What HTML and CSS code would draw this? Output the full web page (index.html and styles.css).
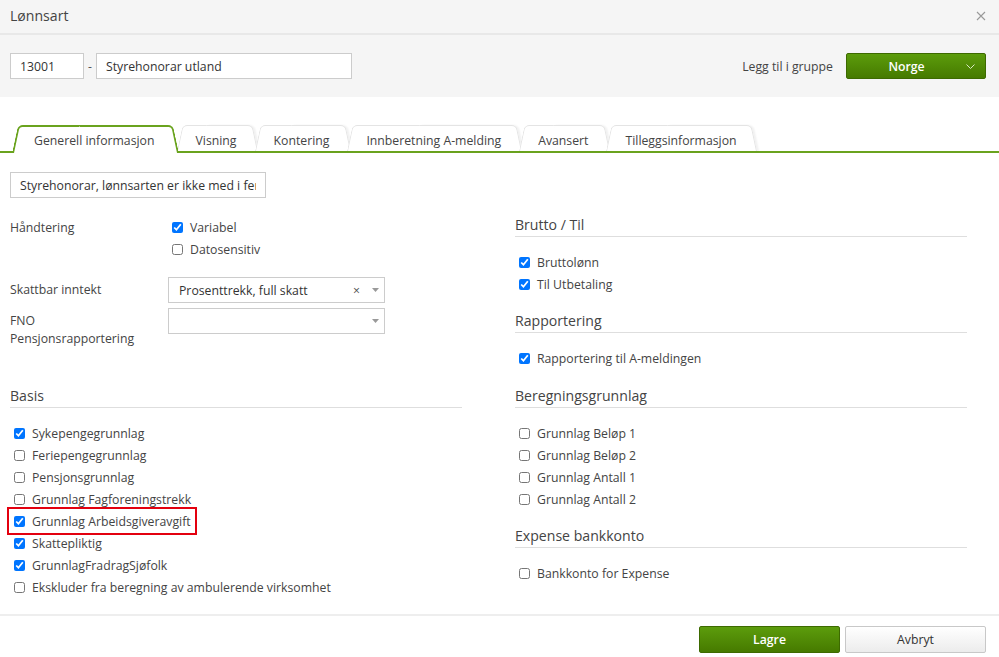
FILE: index.html
```html
<!DOCTYPE html>
<html lang="no">
<head>
    <meta charset="UTF-8">
    <title>Lønnsart</title>
    <link rel="stylesheet" href="styles.css">
</head>
<body>
<div class="dialog">
    <div class="dialog-title">
        <span>Lønnsart</span>
        <svg class="close" width="10" height="10" viewBox="0 0 10 10"><path d="M1 1L9 9M9 1L1 9" stroke="#999" stroke-width="1.1" fill="none"/></svg>
    </div>

    <div class="dialog-head">
        <input class="inp inp-nr" value="13001">
        <span class="dash">-</span>
        <input class="inp inp-name" value="Styrehonorar utland">
        <span class="group-label">Legg til i gruppe</span>
        <button class="btn btn-green btn-group">
            <span class="btn-text">Norge</span>
            <svg width="9" height="5" viewBox="0 0 9 5"><path d="M0.5 0.5L4.5 4.5L8.5 0.5" stroke="#d8e8c4" stroke-width="1" fill="none"/></svg>
        </button>
    </div>

    <ul class="tabs">
        <li class="active">Generell informasjon</li>
        <li>Visning</li>
        <li>Kontering</li>
        <li>Innberetning A-melding</li>
        <li>Avansert</li>
        <li>Tilleggsinformasjon</li>
    </ul>

    <div class="panel">
        <div class="col">
            <input class="inp inp-desc" value="Styrehonorar, lønnsarten er ikke med i feriepengegrunnlaget">

            <div class="field field-handling">
                <div class="field-label label-top">Håndtering</div>
                <div>
                    <label class="check check-inline"><input type="checkbox" checked>Variabel</label>
                    <label class="check check-inline"><input type="checkbox">Datosensitiv</label>
                </div>
            </div>

            <div class="field field-skatt">
                <div class="field-label label-tall">Skattbar inntekt</div>
                <div class="select">
                    <span class="select-value">Prosenttrekk, full skatt</span>
                    <span class="select-clear">×</span>
                    <svg class="select-arrow" width="7" height="4" viewBox="0 0 7 4"><path d="M0 0H7L3.5 4Z" fill="#999"/></svg>
                </div>
            </div>

            <div class="field field-fno">
                <div class="field-label label-wrap">FNO Pensjonsrapportering</div>
                <div class="select">
                    <span class="select-value"></span>
                    <svg class="select-arrow" width="7" height="4" viewBox="0 0 7 4"><path d="M0 0H7L3.5 4Z" fill="#999"/></svg>
                </div>
            </div>

            <div class="section section-basis">
                <h3 class="section-title">Basis</h3>
                <div class="checks-list">
                    <label class="check"><input type="checkbox" checked>Sykepengegrunnlag</label>
                    <label class="check"><input type="checkbox">Feriepengegrunnlag</label>
                    <label class="check"><input type="checkbox">Pensjonsgrunnlag</label>
                    <label class="check"><input type="checkbox">Grunnlag Fagforeningstrekk</label>
                    <label class="check highlight"><input type="checkbox" checked>Grunnlag Arbeidsgiveravgift</label>
                    <label class="check"><input type="checkbox" checked>Skattepliktig</label>
                    <label class="check"><input type="checkbox" checked>GrunnlagFradragSjøfolk</label>
                    <label class="check"><input type="checkbox">Ekskluder fra beregning av ambulerende virksomhet</label>
                </div>
            </div>
        </div>

        <div class="col">
            <div class="section section-first">
                <h3 class="section-title">Brutto / Til</h3>
                <div class="checks-list">
                    <label class="check"><input type="checkbox" checked>Bruttolønn</label>
                    <label class="check"><input type="checkbox" checked>Til Utbetaling</label>
                </div>
            </div>

            <div class="section">
                <h3 class="section-title">Rapportering</h3>
                <div class="checks-list">
                    <label class="check"><input type="checkbox" checked>Rapportering til A-meldingen</label>
                </div>
            </div>

            <div class="section section-calc">
                <h3 class="section-title">Beregningsgrunnlag</h3>
                <div class="checks-list">
                    <label class="check"><input type="checkbox">Grunnlag Beløp 1</label>
                    <label class="check"><input type="checkbox">Grunnlag Beløp 2</label>
                    <label class="check"><input type="checkbox">Grunnlag Antall 1</label>
                    <label class="check"><input type="checkbox">Grunnlag Antall 2</label>
                </div>
            </div>

            <div class="section">
                <h3 class="section-title">Expense bankkonto</h3>
                <div class="checks-list">
                    <label class="check"><input type="checkbox">Bankkonto for Expense</label>
                </div>
            </div>
        </div>
    </div>

    <div class="dialog-foot">
        <button class="btn btn-green btn-foot">Lagre</button>
        <button class="btn btn-light btn-foot">Avbryt</button>
    </div>
</div>
</body>
</html>
```

FILE: styles.css
```css
*{
    margin: 0;
    padding: 0;
    box-sizing: border-box;
}
ul{
    list-style: none;
}
body{
    font-family: "Open Sans", "Liberation Sans", sans-serif;
    font-size: 12.25px;
    color: #444;
    background: #fff;
}
.dialog{
    height: 657px;
    display: flex;
    flex-direction: column;
}

/* title bar */
.dialog-title{
    height: 35px;
    display: flex;
    align-items: center;
    justify-content: space-between;
    padding: 0 13px 2px 10px;
    background: #f5f5f5;
    border-bottom: 2px solid #e8e8e8;
    font-size: 14.1px;
    color: #444;
}

/* header with number / name */
.dialog-head{
    display: flex;
    align-items: center;
    padding: 18px 13px 18px 10px;
    background: #f5f5f5;
}
.inp{
    height: 26px;
    border: 1px solid #ccc;
    background: #fff;
    padding: 0 9px;
    font: inherit;
    color: #333;
    outline: none;
}
.inp-nr{
    width: 74px;
}
.dash{
    width: 12px;
    text-align: center;
    color: #555;
}
.inp-name{
    width: 256px;
}
.group-label{
    margin-left: auto;
    margin-right: 13px;
    color: #444;
}
.btn{
    height: 26px;
    border-radius: 2px;
    font: inherit;
    cursor: pointer;
}
.btn-green{
    background: linear-gradient(#5c9c0c, #467a00);
    border: 1px solid #3d6a00;
    color: #fff;
    font-weight: 600;
}
.btn-group{
    width: 140px;
    display: flex;
    align-items: center;
    padding: 0 10px 0 0;
}
.btn-text{
    flex: 1;
    text-align: center;
}

/* tabs */
.tabs{
    display: flex;
    height: 28px;
    margin-top: 28px;
    padding-left: 12px;
    border-bottom: 2px solid #6aa31e;
}
.tabs li{
    position: relative;
    z-index: 1;
    height: 28px;
    margin: 0 -3px -2px 0;
    padding: 3px 21px 0 19px;
    line-height: 25px;
    color: #444;
    cursor: pointer;
}
.tabs li::before,.tabs li::after{
    content: "";
    position: absolute;
    top: 0;
    bottom: 2px;
    width: 55%;
    background: #fff;
    border-top: 1px solid #e4e4e4;
    z-index: -1;
}
.tabs li::before{
    left: 0;
    border-left: 1px solid #e4e4e4;
    border-top-left-radius: 5px;
    transform-origin: bottom left;
    transform: skewX(-12deg);
}
.tabs li::after{
    right: 0;
    border-right: 1px solid #e4e4e4;
    border-top-right-radius: 5px;
    transform-origin: bottom right;
    transform: skewX(12deg);
    box-shadow: 2px 0 2px rgba(0,0,0,0.06);
}
.tabs li.active{
    z-index: 2;
    padding: 3px 25px 0 22px;
}
.tabs li.active::before,.tabs li.active::after{
    bottom: 0;
    border-color: #6aa31e;
    border-top-width: 2px;
    box-shadow: none;
}
.tabs li.active::before{
    border-left-width: 2px;
}
.tabs li.active::after{
    border-right-width: 2px;
}

/* panel */
.panel{
    flex: 1;
    display: grid;
    grid-template-columns: 452px 452px;
    column-gap: 53px;
    align-items: start;
    padding: 19px 0 0 10px;
}
.inp-desc{
    width: 256px;
}
.field{
    display: flex;
}
.field-label{
    width: 158px;
    flex-shrink: 0;
    line-height: 22px;
}
.label-top{
    padding-top: 1px;
}
.label-tall{
    line-height: 26px;
}
.label-wrap{
    line-height: 18px;
    padding: 4px 30px 0 0;
}
.field-handling{
    margin-top: 18px;
}
.field-skatt{
    margin-top: 17px;
}
.field-fno{
    margin-top: 5px;
}
.select{
    width: 217px;
    height: 26px;
    border: 1px solid #ccc;
    background: #fff;
    display: flex;
    align-items: center;
    padding: 0 5px 0 10px;
    color: #333;
}
.select-value{
    flex: 1;
}
.select-clear{
    color: #555;
    margin-right: 12px;
}

/* check rows */
.check{
    display: flex;
    align-items: center;
    height: 22px;
    padding-left: 4px;
    color: #444;
    cursor: pointer;
}
.check input{
    width: 11px;
    height: 11px;
    margin: 0 7px 0 0;
}
.check.highlight{
    width: fit-content;
    padding-right: 3px;
    outline: 2px solid #e3000f;
    outline-offset: 1px;
}

/* sections */
.section{
    margin-top: 16px;
}
.section-first{
    margin-top: 43px;
}
.section-basis{
    margin-top: 38px;
}
.section-calc{
    margin-top: 17px;
}
.section-title{
    font-size: 14.1px;
    font-weight: normal;
    line-height: 20px;
    padding-bottom: 1px;
    border-bottom: 1px solid #dedede;
    color: #444;
}
.checks-list{
    margin-top: 14px;
}

/* footer */
.dialog-foot{
    display: flex;
    justify-content: flex-end;
    gap: 5px;
    padding: 10px 13px 4px;
    border-top: 2px solid #eee;
}
.btn-foot{
    width: 141px;
    height: 27px;
}
.btn-light{
    background: linear-gradient(#fff, #ececec);
    border: 1px solid #c8c8c8;
    color: #333;
}
```
